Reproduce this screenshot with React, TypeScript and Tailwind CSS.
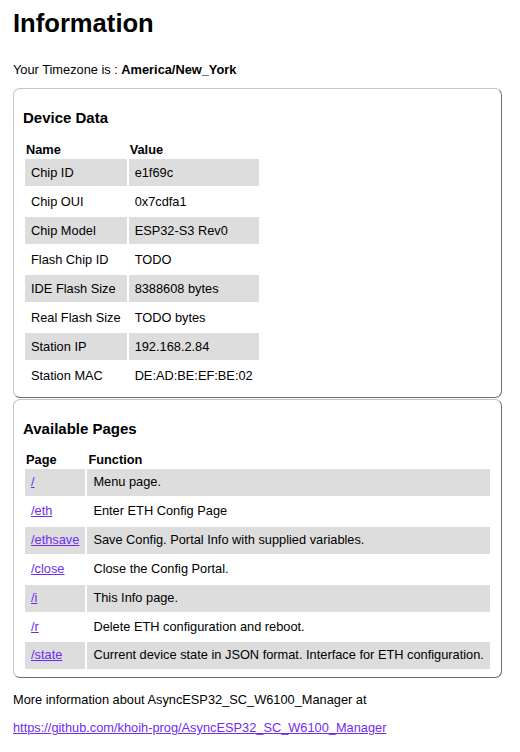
const deviceRows = [
  ["Chip ID", "e1f69c"],
  ["Chip OUI", "0x7cdfa1"],
  ["Chip Model", "ESP32-S3 Rev0"],
  ["Flash Chip ID", "TODO"],
  ["IDE Flash Size", "8388608 bytes"],
  ["Real Flash Size", "TODO bytes"],
  ["Station IP", "192.168.2.84"],
  ["Station MAC", "DE:AD:BE:EF:BE:02"],
];

const pageRows = [
  ["/", "Menu page."],
  ["/eth", "Enter ETH Config Page"],
  ["/ethsave", "Save Config. Portal Info with supplied variables."],
  ["/close", "Close the Config Portal."],
  ["/i", "This Info page."],
  ["/r", "Delete ETH configuration and reboot."],
  ["/state", "Current device state in JSON format. Interface for ETH configuration."],
];

function Box({ title, children }: { title: string; children: React.ReactNode }) {
  return (
    <div className="rounded-[7px] border border-t-[#c4c4c4] border-l-[#c4c4c4] border-r-[#6e6e6e] border-b-[#6e6e6e] pl-[9px] pr-[9px] pt-[5px] pb-[6px]">
      <h3 className="text-[15px] font-bold leading-[17px] mt-[15px] mb-[15px]">{title}</h3>
      {children}
    </div>
  );
}

export default function App() {
  return (
    <div
      className="w-[520px] min-h-[752px] bg-white text-black text-[12.8px] leading-[15px] pl-[13px] pr-[18px]"
      style={{ fontFamily: '"Liberation Sans", Arial, sans-serif' }}
    >
      <h1 className="text-[25.6px] font-bold leading-[29px] pt-[9px] mb-[24px]">Information</h1>
      <p className="mb-[11px]">
        Your Timezone is : <b>America/New_York</b>
      </p>

      <Box title="Device Data">
        <table className="border-separate border-spacing-[2px] -mt-[1px]">
          <thead>
            <tr>
              <th className="text-left font-bold p-0 pl-px leading-[15px]">Name</th>
              <th className="text-left font-bold p-0 pl-px leading-[15px]">Value</th>
            </tr>
          </thead>
          <tbody>
            {deviceRows.map(([k, v], i) => (
              <tr key={k} className={i % 2 === 0 ? "bg-[#dddddd]" : ""}>
                <td className="px-[6px] py-[6px] leading-[15px] whitespace-nowrap">{k}</td>
                <td className="px-[6px] py-[6px] leading-[15px] whitespace-nowrap">{v}</td>
              </tr>
            ))}
          </tbody>
        </table>
      </Box>

      <div className="mt-[1px]">
        <Box title="Available Pages">
          <table className="border-separate border-spacing-[2px] -mt-[2px]">
            <thead>
              <tr>
                <th className="text-left font-bold p-0 pl-px leading-[15px]">Page</th>
                <th className="text-left font-bold p-0 pl-px leading-[15px]">Function</th>
              </tr>
            </thead>
            <tbody>
              {pageRows.map(([k, v], i) => (
                <tr key={k} className={i % 2 === 0 ? "bg-[#dddddd]" : ""}>
                  <td className="px-[6px] py-[6px] leading-[14.9px] whitespace-nowrap">
                    <a href="#" className="text-[#6f2cf0] underline">
                      {k}
                    </a>
                  </td>
                  <td className="px-[6px] py-[6px] leading-[14.9px] whitespace-nowrap">{v}</td>
                </tr>
              ))}
            </tbody>
          </table>
        </Box>
      </div>

      <p className="mt-[14px]">More information about AsyncESP32_SC_W6100_Manager at</p>
      <p className="mt-[13px]">
        <a href="#" className="text-[#6f2cf0] underline">
          https://github.com/khoih-prog/AsyncESP32_SC_W6100_Manager
        </a>
      </p>
    </div>
  );
}
